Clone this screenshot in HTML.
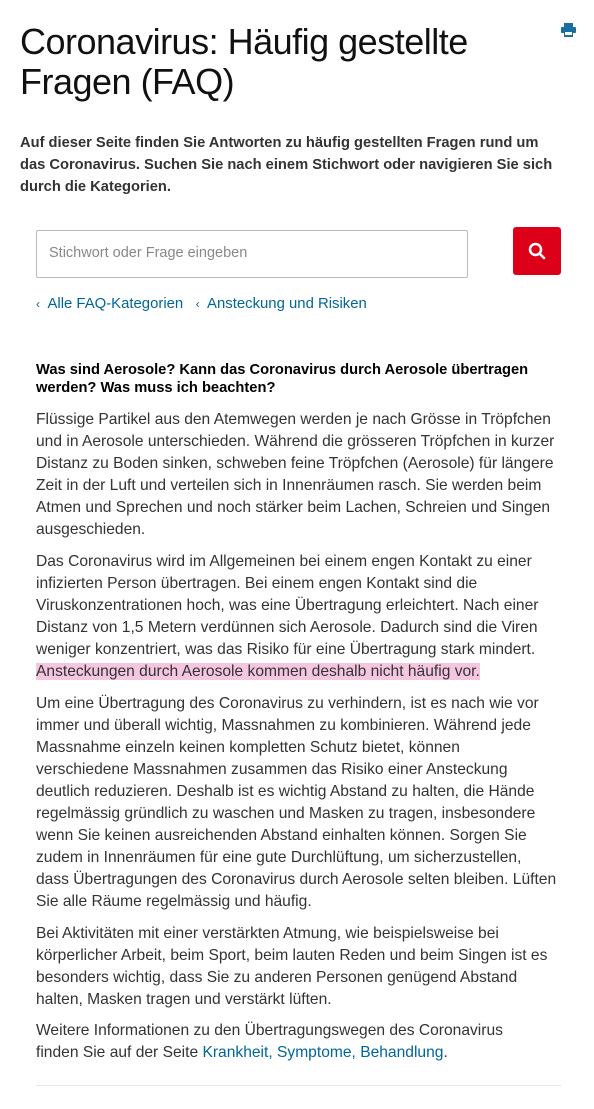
<!DOCTYPE html>
<html><head><meta charset="utf-8"><style>
body{margin:0;width:594px;height:1109px;background:#fff;position:relative;overflow:hidden;font-family:"Liberation Sans",sans-serif;}
.a{position:absolute;white-space:nowrap;}
.t{left:20px;top:22px;font-size:36px;line-height:40px;color:#111;letter-spacing:-0.5px;}
.i{left:20px;top:132px;font-size:14.7px;line-height:22px;font-weight:bold;color:#333;}
.p{left:36px;font-size:15.6px;line-height:22px;color:#333;}
.q{left:36px;top:361px;font-size:14.7px;line-height:18px;font-weight:bold;color:#000;}
.bc{left:36px;top:295px;font-size:14.9px;line-height:18px;color:#006699;}
a{color:#006699;text-decoration:none;}
mark{background:#f5c6df;color:#333;}
</style></head><body>
<div class="a t">Coronavirus: Häufig gestellte<br>Fragen (FAQ)</div>
<svg class="a" style="left:561px;top:23px" width="15" height="14" viewBox="0 0 15 14"><rect x="3" y="0" width="9" height="4" fill="#1a6fa0"/><rect x="0" y="4" width="15" height="6" rx="1" fill="#1a6fa0"/><rect x="3" y="8" width="9" height="6" fill="#1a6fa0"/><rect x="4" y="9" width="7" height="3" fill="#fff"/></svg>
<div class="a i">Auf dieser Seite finden Sie Antworten zu häufig gestellten Fragen rund um<br>das Coronavirus. Suchen Sie nach einem Stichwort oder navigieren Sie sich<br>durch die Kategorien.</div>
<div class="a" style="left:36px;top:230px;width:430px;height:46px;border:1px solid #bbb;border-radius:2px;"></div>
<div class="a" style="left:49px;top:245px;font-size:14.5px;color:#888;">Stichwort oder Frage eingeben</div>
<div class="a" style="left:513px;top:227px;width:48px;height:48px;background:#dc0018;border-radius:3px;"></div>
<svg class="a" style="left:528px;top:242px" width="18" height="18" viewBox="0 0 18 18"><circle cx="7.5" cy="7.5" r="5.5" fill="none" stroke="#fff" stroke-width="2.5"/><line x1="11.5" y1="11.5" x2="16" y2="16" stroke="#fff" stroke-width="2.5" stroke-linecap="round"/></svg>
<div class="a bc"><span style="font-size:12px">&lsaquo;</span>&nbsp; Alle FAQ-Kategorien &nbsp;&nbsp;<span style="font-size:12px">&lsaquo;</span>&nbsp; Ansteckung und Risiken</div>
<div class="a q">Was sind Aerosole? Kann das Coronavirus durch Aerosole übertragen<br>werden? Was muss ich beachten?</div>
<div class="a p" style="top:409px">Flüssige Partikel aus den Atemwegen werden je nach Grösse in Tröpfchen<br>und in Aerosole unterschieden. Während die grösseren Tröpfchen in kurzer<br>Distanz zu Boden sinken, schweben feine Tröpfchen (Aerosole) für längere<br>Zeit in der Luft und verteilen sich in Innenräumen rasch. Sie werden beim<br>Atmen und Sprechen und noch stärker beim Lachen, Schreien und Singen<br>ausgeschieden.</div>
<div class="a p" style="top:551px">Das Coronavirus wird im Allgemeinen bei einem engen Kontakt zu einer<br>infizierten Person übertragen. Bei einem engen Kontakt sind die<br>Viruskonzentrationen hoch, was eine Übertragung erleichtert. Nach einer<br>Distanz von 1,5 Metern verdünnen sich Aerosole. Dadurch sind die Viren<br>weniger konzentriert, was das Risiko für eine Übertragung stark mindert.<br><mark>Ansteckungen durch Aerosole kommen deshalb nicht häufig vor.</mark></div>
<div class="a p" style="top:693px">Um eine Übertragung des Coronavirus zu verhindern, ist es nach wie vor<br>immer und überall wichtig, Massnahmen zu kombinieren. Während jede<br>Massnahme einzeln keinen kompletten Schutz bietet, können<br>verschiedene Massnahmen zusammen das Risiko einer Ansteckung<br>deutlich reduzieren. Deshalb ist es wichtig Abstand zu halten, die Hände<br>regelmässig gründlich zu waschen und Masken zu tragen, insbesondere<br>wenn Sie keinen ausreichenden Abstand einhalten können. Sorgen Sie<br>zudem in Innenräumen für eine gute Durchlüftung, um sicherzustellen,<br>dass Übertragungen des Coronavirus durch Aerosole selten bleiben. Lüften<br>Sie alle Räume regelmässig und häufig.</div>
<div class="a p" style="top:923px">Bei Aktivitäten mit einer verstärkten Atmung, wie beispielsweise bei<br>körperlicher Arbeit, beim Sport, beim lauten Reden und beim Singen ist es<br>besonders wichtig, dass Sie zu anderen Personen genügend Abstand<br>halten, Masken tragen und verstärkt lüften.</div>
<div class="a p" style="top:1020px">Weitere Informationen zu den Übertragungswegen des Coronavirus<br>finden Sie auf der Seite <a>Krankheit, Symptome, Behandlung</a>.</div>
<div class="a" style="left:36px;top:1085px;width:525px;height:1px;background:#e6e6e6;"></div>
</body></html>
